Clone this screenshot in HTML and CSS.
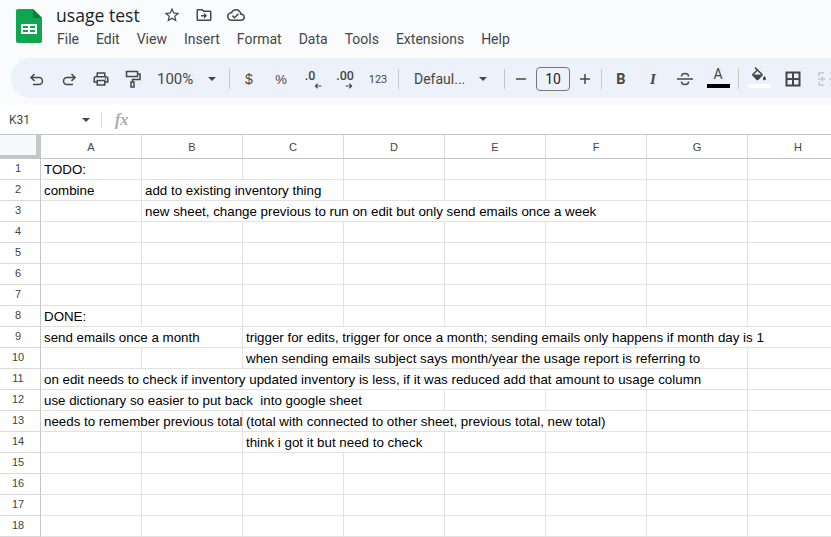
FILE: index.html
```html
<!DOCTYPE html>
<html lang="en">

<head>
    <meta charset="UTF-8" />
    <title>usage test</title>
    <link rel="stylesheet" href="styles.css">
</head>

<body>

    <div class="chrome">
        <div class="topbar">
            <svg class="logo" width="26" height="34" viewBox="0 0 26 34">
                <path d="M2 0H17L26 9V32a2 2 0 0 1-2 2H2a2 2 0 0 1-2-2V2a2 2 0 0 1 2-2z" fill="#0fa64f" />
                <path d="M17 0L26 9H17z" fill="#0b7f3c" />
                <path d="M5 15H21V25H5zM7 17V19H12V17zM14 17V19H19V17zM7 21V23H12V21zM14 21V23H19V21z" fill="#fff" fill-rule="evenodd" />
            </svg>
            <div class="titles">
                <div class="titleline">
                    <span class="doc-name">usage test</span>
                    <svg class="star" width="18" height="18" viewBox="0 0 24 24"><path d="M22 9.24l-7.19-.62L12 2 9.19 8.63 2 9.24l5.46 4.73L5.82 21 12 17.27 18.18 21l-1.63-7.03L22 9.24zM12 15.4l-3.76 2.27 1-4.28-3.32-2.88 4.38-.38L12 6.1l1.71 4.04 4.38.38-3.32 2.88 1 4.28L12 15.4z" /></svg>
                    <svg class="folder" width="18" height="18" viewBox="0 0 24 24"><path d="M20 6h-8l-2-2H4c-1.1 0-2 .9-2 2v12c0 1.1.9 2 2 2h16c1.1 0 2-.9 2-2V8c0-1.1-.9-2-2-2zm0 12H4V6h5.17l2 2H20v10zm-8-4H8v-2h4V9l4 4-4 4v-3z" /></svg>
                    <svg class="cloud" width="18" height="18" viewBox="0 0 24 24"><path d="M19.35 10.04C18.67 6.59 15.64 4 12 4 9.11 4 6.6 5.64 5.35 8.04 2.34 8.36 0 10.91 0 14c0 3.31 2.69 6 6 6h13c2.76 0 5-2.24 5-5 0-2.64-2.05-4.78-4.65-4.96zM19 18H6c-2.21 0-4-1.79-4-4 0-2.05 1.53-3.76 3.56-3.97l1.07-.11.5-.95C8.08 7.14 9.94 6 12 6c2.62 0 4.88 1.86 5.39 4.43l.3 1.5 1.53.11c1.56.1 2.78 1.41 2.78 2.96 0 1.65-1.35 3-3 3zm-9-3.82l-2.09-2.09L6.5 13.5 10 17l6.01-6.01-1.41-1.41z" /></svg>
                </div>
                <div class="menu">
                    <span>File</span>
                    <span>Edit</span>
                    <span>View</span>
                    <span>Insert</span>
                    <span>Format</span>
                    <span>Data</span>
                    <span>Tools</span>
                    <span>Extensions</span>
                    <span>Help</span>
                </div>
            </div>
        </div>

        <div class="toolbar">
            <div class="tool"><svg width="16" height="16" viewBox="0 0 16 16"><path class="line" d="M5.5 3L2 6.5L5.5 10M2 6.5H10a3.5 3.5 0 0 1 0 7H4" /></svg></div>
            <div class="tool"><svg width="16" height="16" viewBox="0 0 16 16"><path class="line" d="M10.5 3L14 6.5L10.5 10M14 6.5H6a3.5 3.5 0 0 0 0 7H12" /></svg></div>
            <div class="tool"><svg width="18" height="18" viewBox="0 0 24 24"><path d="M19 8h-1V3H6v5H5c-1.66 0-3 1.34-3 3v6h4v4h12v-4h4v-6c0-1.66-1.34-3-3-3zM8 5h8v3H8V5zm8 12v2H8v-4h8v2zm2-2v-2H6v2H4v-4c0-.55.45-1 1-1h14c.55 0 1 .45 1 1v4h-2z" /><circle cx="18" cy="11.5" r="1" /></svg></div>
            <div class="tool"><svg width="16" height="18" viewBox="0 0 16 18"><path class="line" d="M1.5 1.5H12.5V6.5H1.5zM12.5 4H15V9.5H7.5V12" /><path class="line" d="M6 12H9V17H6z" /></svg></div>
            <div class="zoom-box"><span>100%</span><i class="caret"></i></div>
            <div class="sep"></div>
            <div class="tool txt dollar">$</div>
            <div class="tool txt">%</div>
            <div class="tool deci deci-less">
                <span>.0</span>
                <svg width="8" height="6" viewBox="0 0 9 8"><path class="line" d="M4 1L1 4L4 7M1 4H9" /></svg>
            </div>
            <div class="tool deci deci-more">
                <span>.00</span>
                <svg width="8" height="6" viewBox="0 0 9 8"><path class="line" d="M5 1L8 4L5 7M0 4H8" /></svg>
            </div>
            <div class="tool num">123</div>
            <div class="sep"></div>
            <div class="font-box"><span>Defaul...</span><i class="caret"></i></div>
            <div class="sep"></div>
            <div class="tool minus"><svg width="12" height="12" viewBox="0 0 12 12"><path class="line" d="M1 6H11" /></svg></div>
            <div class="size-box">10</div>
            <div class="tool plus"><svg width="12" height="12" viewBox="0 0 12 12"><path class="line" d="M1 6H11M6 1V11" /></svg></div>
            <div class="sep"></div>
            <div class="tool glyph-b">B</div>
            <div class="tool glyph-i">I</div>
            <div class="tool"><svg width="16" height="16" viewBox="0 0 16 16"><path class="line" d="M0 8H16M4.5 5.5a3.5 3 0 0 1 7 0M4.5 10.5a3.5 3 0 0 0 7 0" /></svg></div>
            <div class="tool color-tool text-color">
                <span class="glyph-a">A</span>
                <i class="color-bar bar-black"></i>
            </div>
            <div class="sep"></div>
            <div class="tool color-tool">
                <svg class="fill-icon" width="16" height="14" viewBox="2 0 20 18"><path d="M16.56 8.94L7.62 0 6.21 1.41l2.38 2.38-5.15 5.15c-.59.59-.59 1.54 0 2.12l5.5 5.5c.29.29.68.44 1.06.44s.77-.15 1.06-.44l5.5-5.5c.59-.58.59-1.53 0-2.12zM5.21 10L10 5.21 14.79 10H5.21zM19 11.5s-2 2.17-2 3.5c0 1.1.9 2 2 2s2-.9 2-2c0-1.33-2-3.5-2-3.5z" /><path d="M4 10H16L10 16z" /></svg>
                <i class="color-bar bar-white"></i>
            </div>
            <div class="tool borders"><svg width="16" height="16" viewBox="0 0 16 16"><path class="line thick" d="M1.5 1.5H14.5V14.5H1.5zM8 1.5V14.5M1.5 8H14.5" /></svg></div>
            <div class="tool merge"><svg width="18" height="16" viewBox="0 0 18 16"><path class="line" d="M6 2H1V5M1 7V9M1 11V14H6M12 2H17V5M17 11V14H12M7 8H3M5 6L3 8L5 10M11 8H15M13 6L15 8L13 10" /></svg></div>
        </div>
    </div>

    <div class="formula">
        <div class="name-box"><span>K31</span><i class="caret"></i></div>
        <div class="formula-sep"></div>
        <span class="fx">fx</span>
    </div>

    <table class="grid">
        <colgroup>
            <col class="rowhead-col">
            <col span="8" class="cell-col">
        </colgroup>
        <thead>
            <tr>
                <th class="corner"></th>
                <th>A</th><th>B</th><th>C</th><th>D</th><th>E</th><th>F</th><th>G</th><th>H</th>
            </tr>
        </thead>
        <tbody>
            <tr><th>1</th><td>TODO:</td><td></td><td></td><td></td><td></td><td></td><td></td><td></td></tr>
            <tr><th>2</th><td>combine</td><td colspan="2">add to existing inventory thing</td><td></td><td></td><td></td><td></td><td></td></tr>
            <tr><th>3</th><td></td><td colspan="5">new sheet, change previous to run on edit but only send emails once a week</td><td></td><td></td></tr>
            <tr><th>4</th><td></td><td></td><td></td><td></td><td></td><td></td><td></td><td></td></tr>
            <tr><th>5</th><td></td><td></td><td></td><td></td><td></td><td></td><td></td><td></td></tr>
            <tr><th>6</th><td></td><td></td><td></td><td></td><td></td><td></td><td></td><td></td></tr>
            <tr><th>7</th><td></td><td></td><td></td><td></td><td></td><td></td><td></td><td></td></tr>
            <tr><th>8</th><td>DONE:</td><td></td><td></td><td></td><td></td><td></td><td></td><td></td></tr>
            <tr><th>9</th><td colspan="2">send emails once a month</td><td colspan="6">trigger for edits, trigger for once a month; sending emails only happens if month day is 1</td></tr>
            <tr><th>10</th><td></td><td></td><td colspan="5">when sending emails subject says month/year the usage report is referring to</td><td></td></tr>
            <tr><th>11</th><td colspan="7">on edit needs to check if inventory updated inventory is less, if it was reduced add that amount to usage column</td><td></td></tr>
            <tr><th>12</th><td colspan="4">use dictionary so easier to put back  into google sheet</td><td></td><td></td><td></td><td></td></tr>
            <tr><th>13</th><td colspan="2">needs to remember previous total</td><td colspan="4">(total with connected to other sheet, previous total, new total)</td><td></td><td></td></tr>
            <tr><th>14</th><td></td><td></td><td colspan="2">think i got it but need to check</td><td></td><td></td><td></td><td></td></tr>
            <tr><th>15</th><td></td><td></td><td></td><td></td><td></td><td></td><td></td><td></td></tr>
            <tr><th>16</th><td></td><td></td><td></td><td></td><td></td><td></td><td></td><td></td></tr>
            <tr><th>17</th><td></td><td></td><td></td><td></td><td></td><td></td><td></td><td></td></tr>
            <tr><th>18</th><td></td><td></td><td></td><td></td><td></td><td></td><td></td><td></td></tr>
        </tbody>
    </table>

</body>

</html>
```

FILE: styles.css
```css
html,
body {
    margin: 0;
    height: 100%;
    overflow: hidden;
    background: #fff;
}

body {
    font-family: Roboto, "Liberation Sans", sans-serif;
    color: #444746;
}

svg {
    display: block;
    fill: #444746;
}

.line {
    fill: none;
    stroke: #444746;
    stroke-width: 1.5;
}

.thick {
    stroke-width: 2;
}

.caret {
    display: block;
    width: 0;
    height: 0;
    border-left: 4px solid transparent;
    border-right: 4px solid transparent;
    border-top: 4px solid #444746;
}

/* top area */
.chrome {
    background: #f9fbfd;
    height: 105px;
    overflow: hidden;
}

.topbar {
    display: flex;
    height: 58px;
    padding-left: 16px;
    box-sizing: border-box;
}

.logo {
    margin-top: 9px;
}

.titles {
    margin-left: 14px;
}

.titleline {
    display: flex;
    align-items: center;
    height: 30px;
}

.doc-name {
    font-family: "Open Sans", sans-serif;
    font-size: 17.6px;
    color: #1f1f1f;
    width: 107px;
}

.folder {
    margin-left: 14px;
}

.cloud {
    margin-left: 14px;
}

.menu {
    display: flex;
    gap: 17px;
    margin-left: 1px;
    font-size: 14px;
    line-height: 18px;
}

.toolbar {
    display: flex;
    align-items: center;
    box-sizing: border-box;
    width: 900px;
    height: 40px;
    margin-left: 11px;
    padding: 2px 0 0 10px;
    background: #edf2fa;
    border-radius: 20px;
}

.tool {
    flex: none;
    position: relative;
    display: flex;
    align-items: center;
    justify-content: center;
    width: 32px;
    height: 32px;
}

.txt {
    font-family: "Liberation Sans", sans-serif;
    font-size: 13px;
}

.dollar {
    font-size: 14px;
}

.num {
    width: 34px;
    margin-right: 3px;
    font-size: 11px;
}

.deci {
    font-family: Roboto, sans-serif;
    font-weight: 500;
    font-size: 12.5px;
}

.deci span {
    margin-bottom: 7px;
}

.deci-less span {
    margin-right: 6px;
}

.deci svg {
    position: absolute;
    top: 20px;
}

.deci-less svg {
    left: 17px;
}

.deci-more svg {
    left: 16px;
}

.zoom-box {
    flex: none;
    display: flex;
    align-items: center;
    width: 80px;
    padding-left: 8px;
    box-sizing: border-box;
    font-size: 15px;
}

.zoom-box .caret {
    margin-left: 15px;
}

.sep {
    flex: none;
    width: 1px;
    height: 20px;
    margin-right: 3px;
    background: #c7c7c7;
}

.font-box {
    flex: none;
    display: flex;
    align-items: center;
    width: 102px;
    padding-left: 12px;
    box-sizing: border-box;
    font-size: 14px;
}

.font-box .caret {
    margin-left: 14px;
}

.minus {
    margin-left: -3px;
}

.plus {
    margin-left: -1px;
}

.size-box {
    flex: none;
    width: 34px;
    height: 24px;
    margin-left: -1px;
    box-sizing: border-box;
    border: 1px solid #747775;
    border-radius: 4px;
    font-size: 14px;
    line-height: 22px;
    text-align: center;
    color: #1f1f1f;
}

.glyph-b {
    font-family: Roboto, sans-serif;
    font-weight: bold;
    font-size: 14.5px;
}

.glyph-i {
    font-family: "Liberation Serif", serif;
    font-style: italic;
    font-weight: bold;
    font-size: 15px;
}

.color-tool {
    flex-direction: column;
    justify-content: flex-start;
}

.text-color {
    margin: 0 4px 0 1px;
}

.glyph-a {
    font-size: 14px;
    line-height: 20px;
    margin-top: 1px;
}

.fill-icon {
    margin: 4px 0 0 2px;
}

.color-bar {
    position: absolute;
    left: 5px;
    top: 21px;
    width: 23px;
    height: 4px;
}

.bar-black {
    background: #000;
}

.bar-white {
    left: 6px;
    background: #fff;
}

.borders {
    margin-left: 3px;
}

.merge {
    margin-left: 2px;
}

.merge .line {
    stroke: #c4c7c9;
}

/* name box and formula */
.formula {
    display: flex;
    align-items: center;
    height: 29px;
    background: #fff;
    border-bottom: 1px solid #c4c7c5;
}

.name-box {
    display: flex;
    align-items: center;
    justify-content: space-between;
    width: 81px;
    padding-left: 9px;
    font-family: Roboto, sans-serif;
    font-size: 12px;
}

.formula-sep {
    width: 1px;
    height: 16px;
    margin-left: 11px;
    background: #dadce0;
}

.fx {
    margin-left: 13px;
    font-family: "Liberation Serif", serif;
    font-style: italic;
    font-weight: bold;
    font-size: 16px;
    color: #a9acae;
}

/* sheet */
.grid {
    table-layout: fixed;
    width: 849px;
    border-collapse: separate;
    border-spacing: 0;
}

.rowhead-col {
    width: 41px;
}

.cell-col {
    width: 101px;
}

.grid th {
    box-sizing: border-box;
    padding: 0;
    font-family: "Liberation Sans", sans-serif;
    font-weight: normal;
    font-size: 11px;
    color: #444;
    text-align: center;
    border-right: 1px solid #c4c7c5;
    border-bottom: 1px solid #c4c7c5;
    background: #fff;
}

.grid thead th {
    height: 24px;
    border-right-color: #dadada;
    border-bottom-color: #c4c7c5;
}

.grid thead th.corner {
    background: #f8f9fa;
    border-right: 5px solid #c4c7c5;
    border-bottom: 4px solid #c4c7c5;
}

.grid tbody th {
    height: 21px;
    padding-right: 4px;
    vertical-align: top;
    line-height: 18px;
    border-bottom-color: #dadada;
}

.grid td {
    box-sizing: border-box;
    height: 21px;
    padding: 2px 3px 0;
    font-family: "Liberation Sans", sans-serif;
    font-size: 13.33px;
    line-height: 18px;
    color: #000;
    white-space: pre;
    vertical-align: top;
    border-right: 1px solid #e2e2e2;
    border-bottom: 1px solid #e2e2e2;
}
```
